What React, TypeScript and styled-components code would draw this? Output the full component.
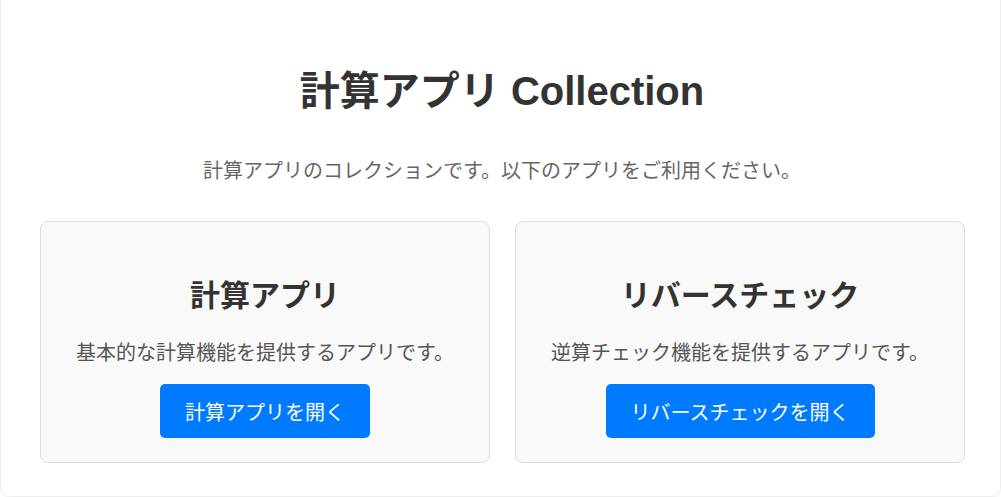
import React from "react";
import styled, { createGlobalStyle } from "styled-components";

const Global = createGlobalStyle`
  html, body { margin: 0; padding: 0; background: #ffffff; }
  body { font-family: "Liberation Sans", Arial, "Noto Sans CJK JP", sans-serif; }
  * { box-sizing: border-box; }
`;

const Page = styled.div`
  width: 1001px;
  height: 497px;
  overflow: hidden;
  padding: 0 1px;
`;

const Container = styled.div`
  margin-top: -8px;
  height: 504px;
  background: #fff;
  border-radius: 8px;
  box-shadow: 0 0 3px rgba(0, 0, 0, 0.18);
  padding: 71px 36px 0 39px;
  display: flex;
  flex-direction: column;
  align-items: center;
`;

const Title = styled.h1`
  margin: 0;
  font-size: 40px;
  line-height: 56px;
  font-weight: bold;
  color: #333;
  text-align: center;
`;

const Subtitle = styled.p`
  margin: 38px 0 0;
  font-size: 20px;
  line-height: 28px;
  color: #666;
  text-align: center;
`;

const Grid = styled.div`
  margin-top: 36px;
  width: 100%;
  display: grid;
  grid-template-columns: 450px 450px;
  column-gap: 25px;
`;

const Card = styled.div`
  background: #f9f9f9;
  border: 1px solid #ddd;
  border-radius: 8px;
  padding: 52px 20px 24px;
  display: flex;
  flex-direction: column;
  align-items: center;
  text-align: center;
`;

const CardTitle = styled.h2`
  margin: 0;
  font-size: 30px;
  line-height: 44px;
  font-weight: bold;
  color: #333;
`;

const CardText = styled.p`
  margin: 21px 0 0;
  font-size: 20px;
  line-height: 28px;
  color: #555;
`;

const OpenButton = styled.a`
  margin-top: 17px;
  display: inline-flex;
  align-items: center;
  justify-content: center;
  height: 54px;
  padding: 0 25px;
  background: #007bff;
  color: #fff;
  border-radius: 5px;
  font-size: 20px;
  text-decoration: none;
  cursor: pointer;
`;

const apps = [
  { title: "計算アプリ", text: "基本的な計算機能を提供するアプリです。", button: "計算アプリを開く" },
  { title: "リバースチェック", text: "逆算チェック機能を提供するアプリです。", button: "リバースチェックを開く" },
];

export default function App() {
  return (
    <>
      <Global />
      <Page>
        <Container>
          <Title>計算アプリ Collection</Title>
          <Subtitle>計算アプリのコレクションです。以下のアプリをご利用ください。</Subtitle>
          <Grid>
            {apps.map((a) => (
              <Card key={a.title}>
                <CardTitle>{a.title}</CardTitle>
                <CardText>{a.text}</CardText>
                <OpenButton href="#">{a.button}</OpenButton>
              </Card>
            ))}
          </Grid>
        </Container>
      </Page>
    </>
  );
}
